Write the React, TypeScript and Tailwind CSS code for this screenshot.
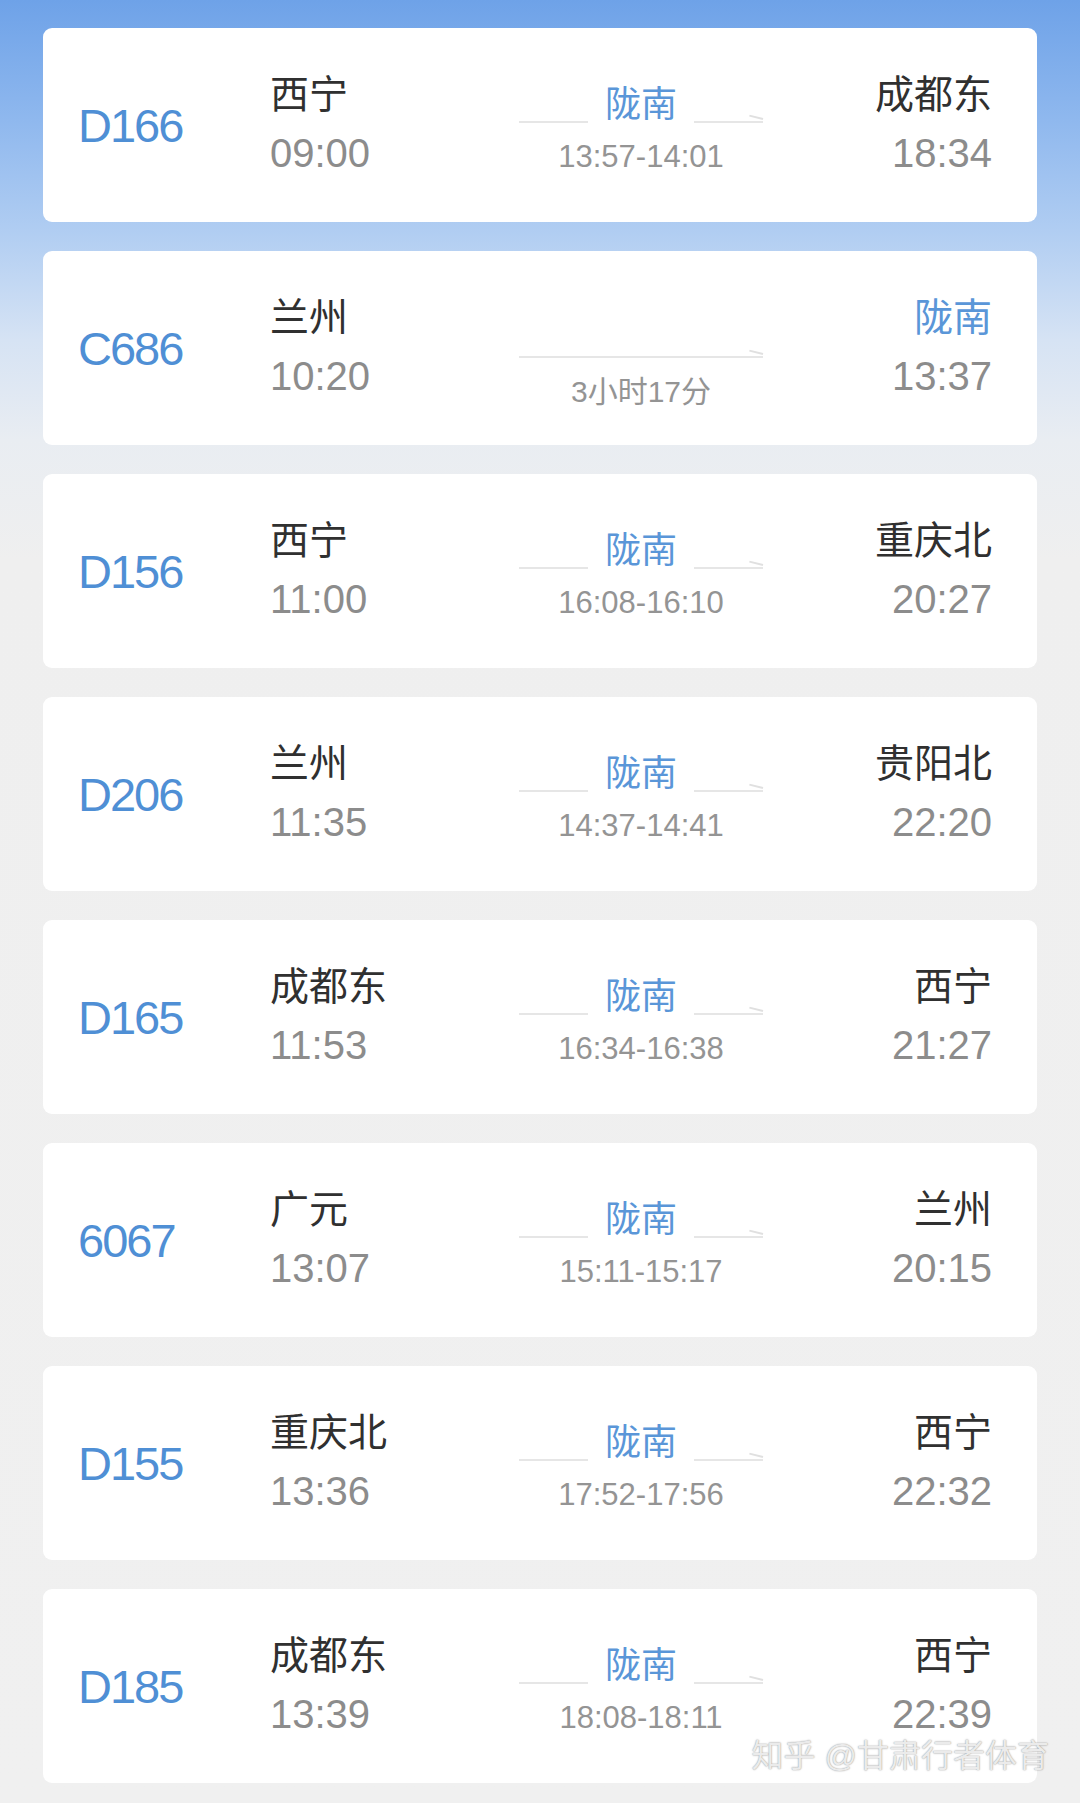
import React from "react";

type Train = {
  no: string;
  from: string;
  dep: string;
  to: string;
  arr: string;
  mid?: string;
  duration?: string;
  toBlue?: boolean;
};

const trains: Train[] = [
  { no: "D166", from: "西宁", dep: "09:00", to: "成都东", arr: "18:34", mid: "13:57-14:01" },
  { no: "C686", from: "兰州", dep: "10:20", to: "陇南", arr: "13:37", duration: "3小时17分", toBlue: true },
  { no: "D156", from: "西宁", dep: "11:00", to: "重庆北", arr: "20:27", mid: "16:08-16:10" },
  { no: "D206", from: "兰州", dep: "11:35", to: "贵阳北", arr: "22:20", mid: "14:37-14:41" },
  { no: "D165", from: "成都东", dep: "11:53", to: "西宁", arr: "21:27", mid: "16:34-16:38" },
  { no: "6067", from: "广元", dep: "13:07", to: "兰州", arr: "20:15", mid: "15:11-15:17" },
  { no: "D155", from: "重庆北", dep: "13:36", to: "西宁", arr: "22:32", mid: "17:52-17:56" },
  { no: "D185", from: "成都东", dep: "13:39", to: "西宁", arr: "22:39", mid: "18:08-18:11" },
];

function Line({ arrow }: { arrow?: boolean }) {
  return (
    <div className="relative h-[2px] flex-1 bg-[#e6e6e6]">
      {arrow && (
        <div className="absolute right-0 top-[-3px] h-[2px] w-[14px] origin-right rotate-[14deg] bg-[#e0e0e0]" />
      )}
    </div>
  );
}

function Card({ t, last }: { t: Train; last?: boolean }) {
  return (
    <div className="relative flex h-[194px] w-full rounded-[9px] bg-white">
      <div className="flex w-[227px] items-center pl-[35px]">
        <span className="text-[47px] leading-none tracking-[-2px] text-[#4f8fd5]">{t.no}</span>
      </div>
      <div className="flex w-[249px] flex-col pt-[48px]">
        <span className="text-[39px] leading-[38px] text-[#303030]">{t.from}</span>
        <span className="mt-[19px] text-[40px] leading-[40px] text-[#8c8c8c]">{t.dep}</span>
      </div>
      {t.mid ? (
        <div className="flex w-[244px] flex-col pt-[59px]">
          <div className="flex items-end">
            <Line />
            <span className="mx-[17px] text-[36px] leading-[36px] text-[#5a96d8]">陇南</span>
            <Line arrow />
          </div>
          <span className="mt-[19px] text-center text-[31px] leading-[30px] text-[#949494]">{t.mid}</span>
        </div>
      ) : (
        <div className="flex w-[244px] flex-col pt-[105px]">
          <div className="flex">
            <Line arrow />
          </div>
          <span className="mt-[19px] text-center text-[30px] leading-[30px] text-[#949494]">{t.duration}</span>
        </div>
      )}
      <div className="flex flex-1 flex-col items-end pr-[45px] pt-[48px]">
        <span className={`text-[39px] leading-[38px] ${t.toBlue ? "text-[#5a96d8]" : "text-[#303030]"}`}>
          {t.to}
        </span>
        <span className="mt-[19px] text-[40px] leading-[40px] text-[#8c8c8c]">{t.arr}</span>
      </div>
      {last && (
        <div className="absolute bottom-[11px] right-[-12px] whitespace-nowrap text-[32px] leading-[32px] text-[#ebebeb] [text-shadow:0_0_1.5px_rgba(0,0,0,0.5)]">
          知乎 @甘肃行者体育
        </div>
      )}
    </div>
  );
}

export default function App() {
  return (
    <div
      className="min-h-[1803px] w-[1080px] bg-[linear-gradient(180deg,#6ea2e8_0px,#8fb8ee_120px,#b0cdf2_230px,#d6e3f4_340px,#e9edf2_440px,#efefef_560px,#f0f0f0_100%)] px-[43px] pb-[20px] pt-[28px]"
      style={{ fontFamily: '"Liberation Sans", "Noto Sans CJK SC", sans-serif' }}
    >
      <div className="flex flex-col gap-[29px]">
        {trains.map((t, i) => (
          <Card key={t.no} t={t} last={i === trains.length - 1} />
        ))}
      </div>
    </div>
  );
}
